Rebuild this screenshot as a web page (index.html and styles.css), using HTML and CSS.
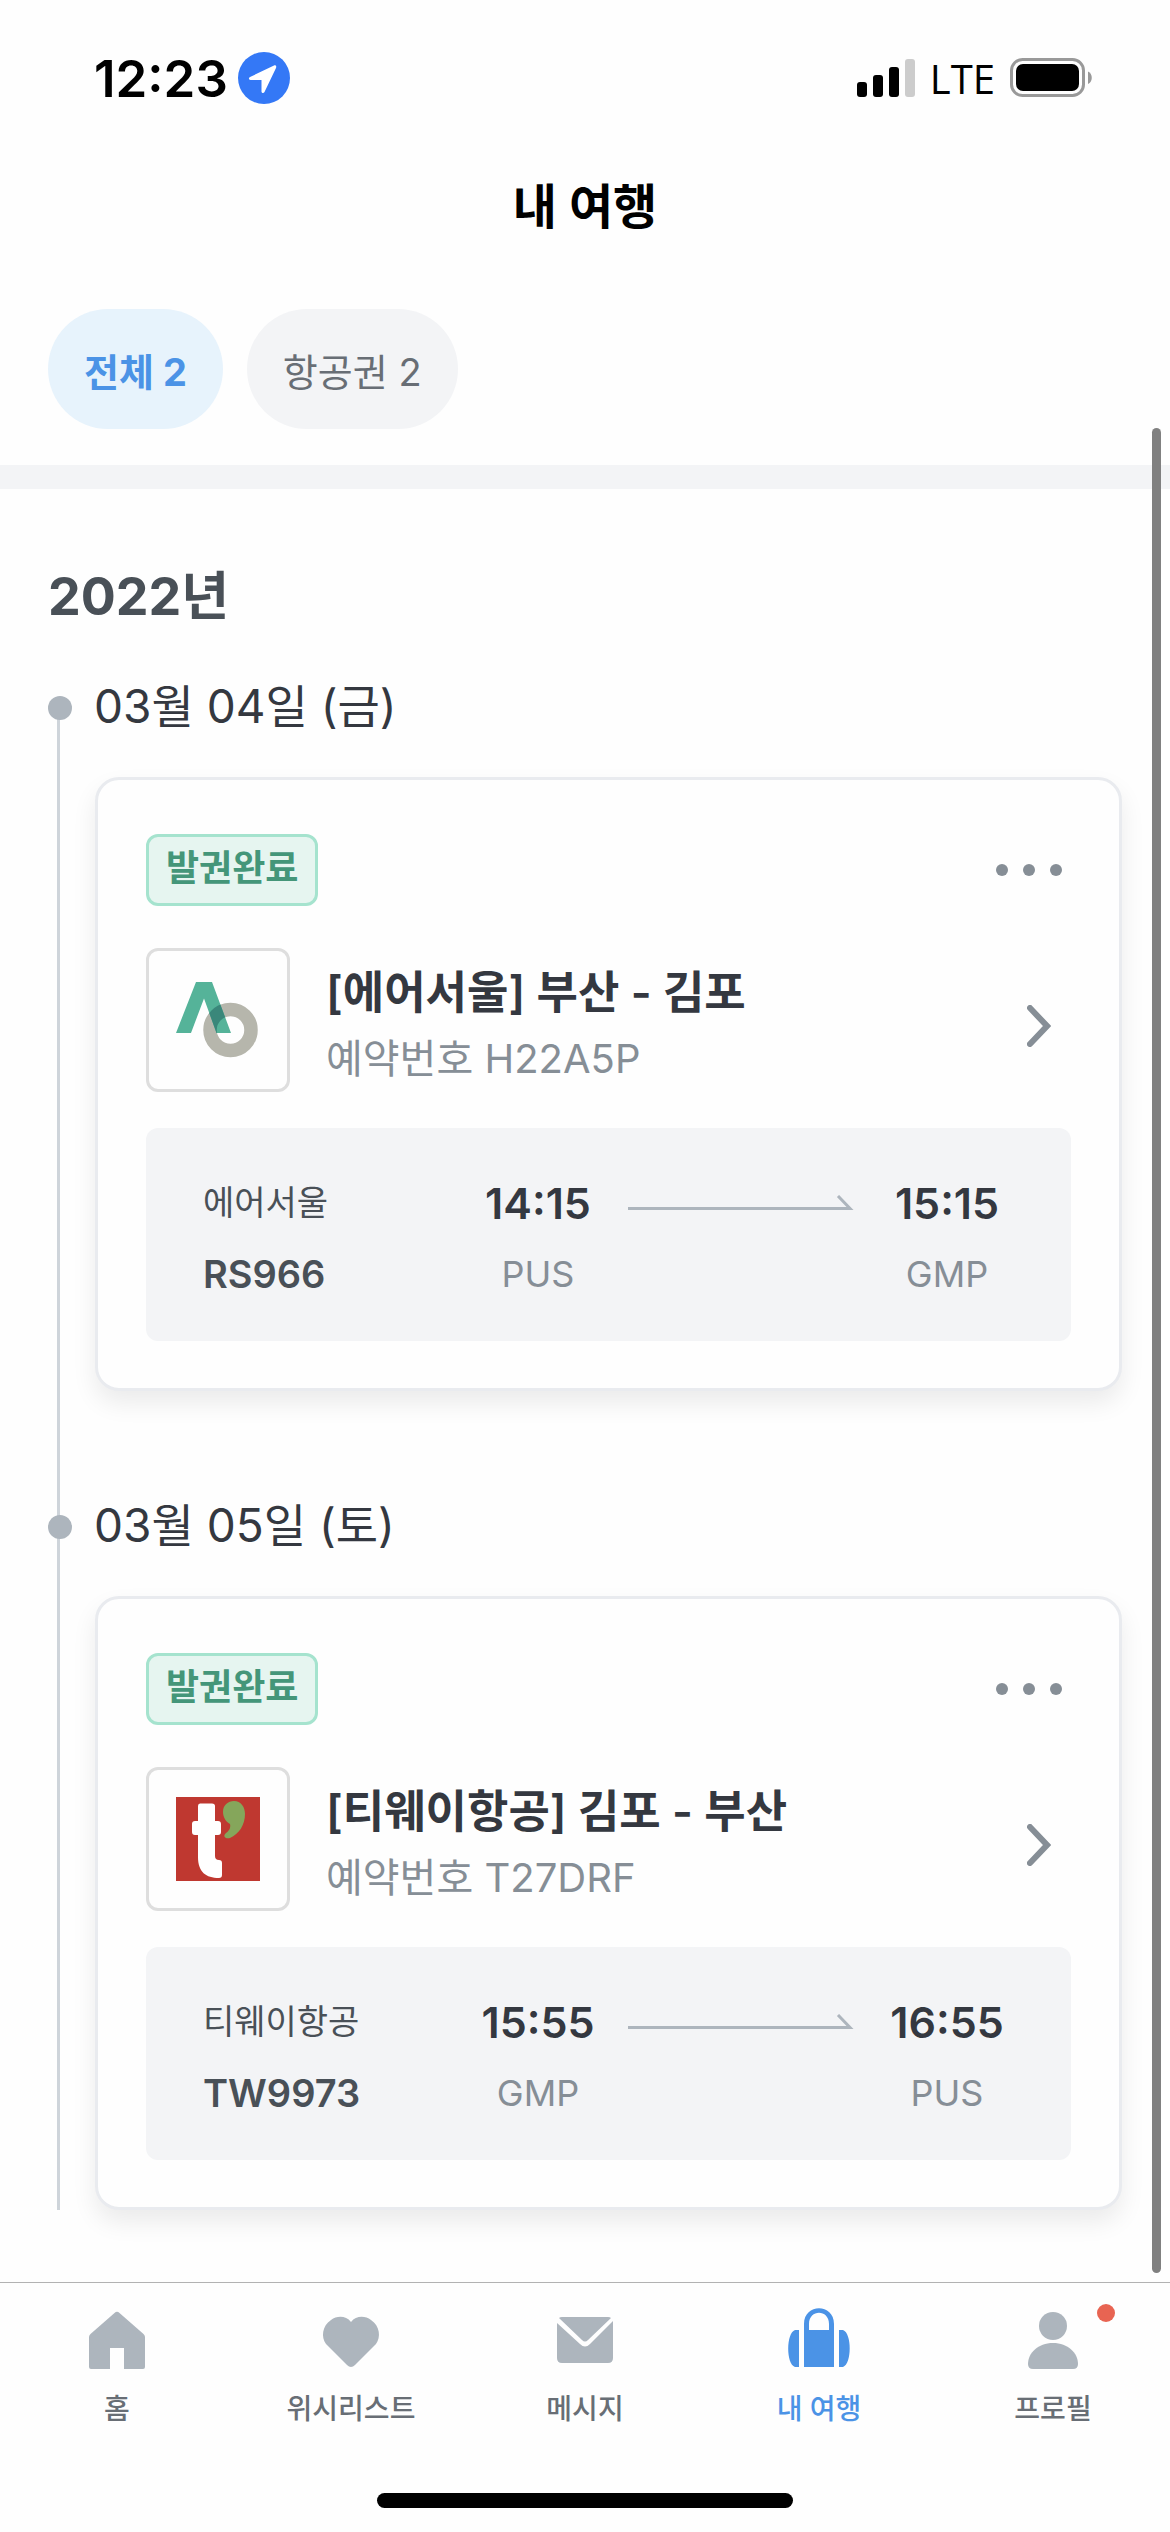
FILE: index.html
```html
<!DOCTYPE html>
<html lang="ko">
<head>
    <meta charset="UTF-8">
    <meta name="viewport" content="width=device-width, initial-scale=1.0">
    <title>내 여행</title>
    <link rel="stylesheet" href="styles.css">
</head>
<body>
    <div class="status-bar">
        <div class="status-left">
            <span class="clock">12:23</span>
            <svg class="location" width="52" height="52" viewBox="0 0 52 52">
                <circle cx="26" cy="26" r="26" fill="#3478f6"/>
                <path d="M36 13.500 12 25c-1.800.9-1.200 3 .5 3H23.500V39.500c0 1.800 2.300 2 3 .5L38 16c.8-1.800-.3-3.200-2-2.500z" fill="#fff"/>
            </svg>
        </div>
        <div class="status-right">
            <svg width="58" height="38" viewBox="0 0 58 38">
                <rect x="0" y="23" width="10" height="15" rx="3"/>
                <rect x="16" y="16" width="10" height="22" rx="3"/>
                <rect x="32" y="8" width="10" height="30" rx="3"/>
                <rect x="48" y="0" width="10" height="38" rx="3" fill="#ccc"/>
            </svg>
            <span class="network">LTE</span>
            <svg width="82" height="40" viewBox="0 0 82 40">
                <rect x="1.500" y="1.500" width="72" height="36" rx="11" fill="none" stroke="#999" stroke-width="3"/>
                <rect x="6" y="6" width="63" height="27" rx="7"/>
                <path d="M78 13.500c5 2 5 10.500 0 12.500z" fill="#999"/>
            </svg>
        </div>
    </div>

    <header class="header">
        <h1>내 여행</h1>
        <div class="filters">
            <button class="chip active">전체 2</button>
            <button class="chip">항공권 2</button>
        </div>
    </header>

    <main class="trips">
        <h2>2022년</h2>

        <div class="timeline">
            <section class="day">
                <h3>03월 04일 (금)</h3>
                <article class="card">
                    <div class="card-top">
                        <span class="badge">발권완료</span>
                        <button class="more" aria-label="더보기">
                            <svg width="66" height="12" viewBox="0 0 66 12" fill="#868e96">
                                <circle cx="6" cy="6" r="6"/>
                                <circle cx="33" cy="6" r="6"/>
                                <circle cx="60" cy="6" r="6"/>
                            </svg>
                        </button>
                    </div>
                    <a class="booking" href="#">
                        <span class="logo">
                            <svg width="84" height="84" viewBox="0 0 84 84">
                                <clipPath id="peak">
                                    <path d="M0 55 20 4H36L55 55H40.500L28 20.500 15 55z"/>
                                </clipPath>
                                <circle cx="54.500" cy="52" r="20.500" fill="none" stroke="#b6b6ac" stroke-width="13.500"/>
                                <path d="M0 55 20 4H36L55 55H40.500L28 20.500 15 55z" fill="#55b399"/>
                                <circle cx="54.500" cy="52" r="20.500" fill="none" stroke="#3a877a" stroke-width="13.500" clip-path="url(#peak)"/>
                            </svg>
                        </span>
                        <span class="booking-text">
                            <strong>[에어서울] 부산 - 김포</strong>
                            <span>예약번호 H22A5P</span>
                        </span>
                        <svg class="chevron" width="24" height="42" viewBox="0 0 24 42">
                            <path d="M3 3 20 21 3 39" fill="none" stroke="#868e96" stroke-width="6" stroke-linecap="round"/>
                        </svg>
                    </a>
                    <div class="flight">
                        <div class="airline">
                            <span>에어서울</span>
                            <strong>RS966</strong>
                        </div>
                        <div class="stop">
                            <strong>14:15</strong>
                            <span>PUS</span>
                        </div>
                        <svg class="arrow" width="226" height="15" viewBox="0 0 226 15">
                            <path d="M0 13.500H222L210 1" fill="none" stroke="#adb5bd" stroke-width="3"/>
                        </svg>
                        <div class="stop">
                            <strong>15:15</strong>
                            <span>GMP</span>
                        </div>
                    </div>
                </article>
            </section>

            <section class="day">
                <h3>03월 05일 (토)</h3>
                <article class="card">
                    <div class="card-top">
                        <span class="badge">발권완료</span>
                        <button class="more" aria-label="더보기">
                            <svg width="66" height="12" viewBox="0 0 66 12" fill="#868e96">
                                <circle cx="6" cy="6" r="6"/>
                                <circle cx="33" cy="6" r="6"/>
                                <circle cx="60" cy="6" r="6"/>
                            </svg>
                        </button>
                    </div>
                    <a class="booking" href="#">
                        <span class="logo">
                            <svg width="84" height="84" viewBox="0 0 84 84">
                                <rect width="84" height="84" fill="#bf3830"/>
                                <path d="M24 6.500H36Q39 6.500 39 9V24H42Q45 24 45 27V35Q45 38 42 38H39V59Q39 63 43 63Q46 63 46 66V78Q46 81 43 81C30 81 22 75 22 60V38H19Q16 38 16 35V27Q16 24 19 24H22V9Q22 6.500 24 6.500z" fill="#fff"/>
                                <path d="M58 4C65 4 69 10 69 17C69 28 63 37 54 41C50 42 47 40 49 37C53 34 55 31 54 27C50 25 47 20 47 15C47 8 52 4 58 4z" fill="#85a65b"/>
                            </svg>
                        </span>
                        <span class="booking-text">
                            <strong>[티웨이항공] 김포 - 부산</strong>
                            <span>예약번호 T27DRF</span>
                        </span>
                        <svg class="chevron" width="24" height="42" viewBox="0 0 24 42">
                            <path d="M3 3 20 21 3 39" fill="none" stroke="#868e96" stroke-width="6" stroke-linecap="round"/>
                        </svg>
                    </a>
                    <div class="flight">
                        <div class="airline">
                            <span>티웨이항공</span>
                            <strong>TW9973</strong>
                        </div>
                        <div class="stop">
                            <strong>15:55</strong>
                            <span>GMP</span>
                        </div>
                        <svg class="arrow" width="226" height="15" viewBox="0 0 226 15">
                            <path d="M0 13.500H222L210 1" fill="none" stroke="#adb5bd" stroke-width="3"/>
                        </svg>
                        <div class="stop">
                            <strong>16:55</strong>
                            <span>PUS</span>
                        </div>
                    </div>
                </article>
            </section>
        </div>
        <div class="scroll-thumb"></div>
    </main>

    <nav class="tab-bar">
        <a href="#">
            <svg width="72" height="72" viewBox="0 0 72 72">
                <path d="M33.500 6Q36 3.500 38.500 6L62.500 27Q64 28.500 64 30V60Q64 62 62 62H43V41H29V62H10Q8 62 8 60V30Q8 28.500 9.500 27z"/>
            </svg>
            <span>홈</span>
        </a>
        <a href="#">
            <svg width="72" height="72" viewBox="0 0 72 72">
                <path d="M36 15C41 8.500 50 8.500 56 13C65 19 66 30 61 37L40 58Q36 62 32 58L11 37C6 30 7 19 16 13C22 8.500 31 8.500 36 15z"/>
            </svg>
            <span>위시리스트</span>
        </a>
        <a href="#">
            <svg width="72" height="72" viewBox="0 0 72 72">
                <path d="M10 11Q11 10 13 10H59Q61 10 62 11L39 33Q36 36 33 33z"/>
                <path d="M8 16 31 37Q36 42 41 37L64 14V51Q64 56 59 56H13Q8 56 8 51z"/>
            </svg>
            <span>메시지</span>
        </a>
        <a class="current" href="#">
            <svg width="72" height="72" viewBox="0 0 72 72">
                <path fill-rule="evenodd" d="M21 60V17C21-4 51-4 51 17V60zM26 23H46V17C46 2 26 2 26 17z"/>
                <path d="M16 23V60H12C3 57 3 26 12 23zM56 23V60H60C69 57 69 26 60 23z"/>
            </svg>
            <span>내 여행</span>
        </a>
        <a class="has-news" href="#">
            <svg width="72" height="72" viewBox="0 0 72 72">
                <circle cx="36" cy="19" r="14"/>
                <path d="M36 36C51 36 61 46 61 57Q61 62 56 62H16Q11 62 11 57C11 46 21 36 36 36z"/>
            </svg>
            <span>프로필</span>
        </a>
    </nav>
    <div class="home-indicator"></div>
</body>
</html>
```

FILE: styles.css
```css
* {
    box-sizing: border-box;
}

body {
    margin: 0;
    min-height: 100vh;
    display: flex;
    flex-direction: column;
    background-color: #fefefe;
    color: #343840;
    font-family: Inter, "Noto Sans CJK KR", sans-serif;
}

h1, h2, h3 {
    margin: 0;
}

svg {
    display: block;
    flex-shrink: 0;
}

button {
    border: none;
    background: none;
    padding: 0;
    font-family: inherit;
    cursor: pointer;
}

a {
    color: inherit;
    text-decoration: none;
}

/* status bar */
.status-bar {
    display: flex;
    justify-content: space-between;
    align-items: center;
    height: 156px;
    padding: 0 78px 0 94px;
    color: #000;
}

.status-left, .status-right {
    display: flex;
    align-items: center;
}

.status-left {
    gap: 10px;
}

.status-right {
    gap: 15px;
}

.clock {
    font-size: 51px;
    font-weight: 600;
}

.network {
    font-family: "Open Sans", sans-serif;
    font-size: 40px;
    font-weight: 500;
}

/* header */
.header {
    border-bottom: 24px solid #f3f4f6;
}

h1 {
    height: 102px;
    line-height: 102px;
    text-align: center;
    color: #000;
    font-size: 48px;
    font-weight: 600;
}

.filters {
    display: flex;
    gap: 24px;
    padding: 51px 48px 36px;
}

.chip {
    height: 120px;
    padding: 0 36px;
    border-radius: 60px;
    background-color: #f3f4f6;
    color: #686e75;
    font-size: 38px;
}

.chip.active {
    background-color: #e7f3fc;
    color: #4b93e6;
    font-weight: 700;
}

/* timeline */
.trips {
    position: relative;
    flex: 1;
    padding: 72px 48px;
}

h2 {
    line-height: 72px;
    color: #495057;
    font-size: 52px;
    font-weight: 700;
}

.timeline {
    margin-top: 40px;
    background: linear-gradient(#ced4da, #ced4da) 9px 35px / 3px 100% no-repeat;
}

.day {
    padding-left: 47px;
}

.day + .day {
    margin-top: 101px;
}

h3 {
    display: flex;
    align-items: center;
    height: 60px;
    margin-left: -47px;
    font-size: 46px;
    font-weight: 400;
}

h3::before {
    content: "";
    width: 24px;
    height: 24px;
    margin-top: 10px;
    margin-right: 22px;
    border-radius: 50%;
    background-color: #adb5bd;
}

.card {
    margin-top: 44px;
    padding: 54px 48px 47px;
    border: 3px solid #e9ebef;
    border-radius: 24px;
    background-color: #fefefe;
    box-shadow: 0 12px 24px rgba(0, 0, 0, 0.08);
}

.card-top {
    display: flex;
    justify-content: space-between;
    align-items: center;
}

.badge {
    height: 72px;
    padding: 0 17px;
    border: 3px solid #a5e3ce;
    border-radius: 12px;
    background-color: #e6f5f0;
    color: #449679;
    font-size: 36px;
    font-weight: 600;
    line-height: 63px;
}

.more {
    padding: 24px 9px;
}

.booking {
    display: flex;
    align-items: center;
    margin-top: 42px;
    padding-right: 20px;
}

.logo {
    display: flex;
    justify-content: center;
    align-items: center;
    width: 144px;
    height: 144px;
    border: 3px solid #dedede;
    border-radius: 12px;
}

.booking-text {
    display: flex;
    flex-direction: column;
    flex: 1;
    margin-top: 12px;
    margin-left: 36px;
    color: #868e96;
    font-size: 40px;
    line-height: 66px;
}

.booking-text strong {
    color: #343840;
    font-size: 45px;
    font-weight: 600;
}

.chevron {
    margin-top: 12px;
}

.flight {
    display: flex;
    align-items: flex-start;
    margin-top: 36px;
    padding: 39px 34px 32px 57px;
    border-radius: 12px;
    background-color: #f3f4f6;
}

.airline {
    flex: 1;
    display: flex;
    flex-direction: column;
    color: #495057;
    font-size: 34px;
    line-height: 72px;
}

.airline strong {
    font-size: 38px;
    font-weight: 600;
    line-height: 70px;
}

.stop {
    display: flex;
    flex-direction: column;
    align-items: center;
    width: 180px;
    color: #868e96;
    font-size: 36px;
    line-height: 70px;
}

.stop strong {
    color: #343840;
    font-size: 43px;
    font-weight: 600;
    line-height: 72px;
}

.arrow {
    margin-top: 28px;
    margin-right: 3px;
}

.scroll-thumb {
    position: absolute;
    top: -61px;
    right: 9px;
    bottom: 9px;
    width: 9px;
    border-radius: 5px;
    background-color: #808080;
}

/* bottom tabs */
.tab-bar {
    display: grid;
    grid-template-columns: repeat(5, 1fr);
    border-top: 1px solid #b2b2b2;
    padding-top: 24px;
}

.tab-bar a {
    position: relative;
    display: flex;
    flex-direction: column;
    align-items: center;
    color: #686e75;
    font-size: 28px;
    font-weight: 500;
    line-height: 60px;
}

.tab-bar svg {
    fill: #adb5bd;
}

.tab-bar .current {
    color: #4b93e6;
}

.tab-bar .current svg {
    fill: #4b93e6;
}

.has-news::after {
    content: "";
    position: absolute;
    top: -3px;
    right: 55px;
    width: 18px;
    height: 18px;
    border-radius: 50%;
    background-color: #e86452;
}

.home-indicator {
    width: 416px;
    max-width: 50%;
    height: 15px;
    margin: 54px auto 24px;
    border-radius: 8px;
    background-color: #000;
}
```
